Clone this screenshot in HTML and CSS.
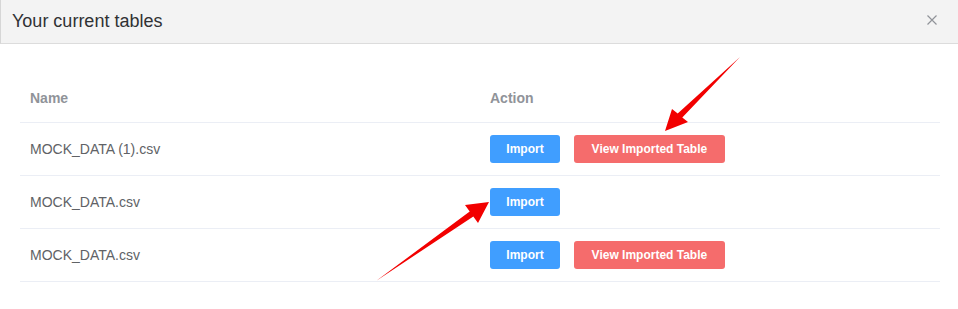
FILE: index.html
```html
<!DOCTYPE html>
<html lang="en">
<head>
    <meta charset="UTF-8">
    <meta name="viewport" content="width=device-width, initial-scale=1">
    <title>Your current tables</title>
    <link rel="stylesheet" href="styles.css">
</head>
<body>
    <div class="dialog">
        <div class="dialog-header">
            <span class="dialog-title">Your current tables</span>
            <button class="close" aria-label="Close">
                <svg width="10" height="10" viewBox="0 0 10 10">
                    <path d="M0.5 0.5 L9.5 9.5 M9.5 0.5 L0.5 9.5" stroke="#909399" stroke-width="1.2" fill="none"/>
                </svg>
            </button>
        </div>

        <div class="dialog-body">
            <table>
                <thead>
                    <tr>
                        <th class="col-name">Name</th>
                        <th>Action</th>
                    </tr>
                </thead>
                <tbody>
                    <tr>
                        <td>MOCK_DATA (1).csv</td>
                        <td>
                            <button class="btn btn-primary">Import</button>
                            <button class="btn btn-danger">View Imported Table</button>
                        </td>
                    </tr>
                    <tr>
                        <td>MOCK_DATA.csv</td>
                        <td>
                            <button class="btn btn-primary">Import</button>
                        </td>
                    </tr>
                    <tr>
                        <td>MOCK_DATA.csv</td>
                        <td>
                            <button class="btn btn-primary">Import</button>
                            <button class="btn btn-danger">View Imported Table</button>
                        </td>
                    </tr>
                </tbody>
            </table>
        </div>
    </div>

    <!-- annotation arrows drawn over the screenshot -->
    <svg class="arrows" width="958" height="309" viewBox="0 0 958 309">
        <polygon points="740,57 682.3,117.4 688,122 665,131 672,109 677.7,113.6" fill="#f20000"/>
        <polygon points="376,281 469.7,211.6 465,205 489,202 478,223 473.3,216.4" fill="#f20000"/>
    </svg>
</body>
</html>
```

FILE: styles.css
```css
body {
    margin: 0;
    font-family: "Liberation Sans", Arial, sans-serif;
    background: #fff;
    color: #606266;
}

.dialog {
    position: relative;
    width: 958px;
    height: 309px;
    overflow: hidden;
}

.dialog-header {
    display: flex;
    align-items: center;
    justify-content: space-between;
    height: 43px;
    padding: 0 20px 0 11px;
    background: #f3f3f3;
    border-bottom: 1px solid #dcdcdc;
    border-left: 1px solid #d6d6d6;
    box-sizing: content-box;
}

.dialog-title {
    font-size: 18px;
    color: #303133;
    margin-top: -1px;
}

.close {
    border: none;
    background: none;
    padding: 0;
    margin: -4px 1px 0 0;
    display: flex;
    cursor: pointer;
}

.dialog-body {
    padding: 31px 18px 0 20px;
}

table {
    width: 100%;
    border-collapse: collapse;
    font-size: 14px;
}

th, td {
    padding: 12px 10px;
    line-height: 23px;
    text-align: left;
    border-bottom: 1px solid #ebeef5;
}

th {
    color: #909399;
    font-weight: bold;
}

.col-name {
    width: 440px;
}

.btn {
    height: 28px;
    padding: 0 15px;
    font-family: inherit;
    font-size: 12px;
    font-weight: bold;
    color: #fff;
    border: none;
    border-radius: 3px;
    vertical-align: middle;
    cursor: pointer;
}

.btn + .btn {
    margin-left: 10px;
}

.btn-primary {
    background: #409eff;
    width: 70px;
}

.btn-danger {
    background: #f56c6c;
    width: 151px;
}

.arrows {
    position: absolute;
    left: 0;
    top: 0;
    pointer-events: none;
}
```
